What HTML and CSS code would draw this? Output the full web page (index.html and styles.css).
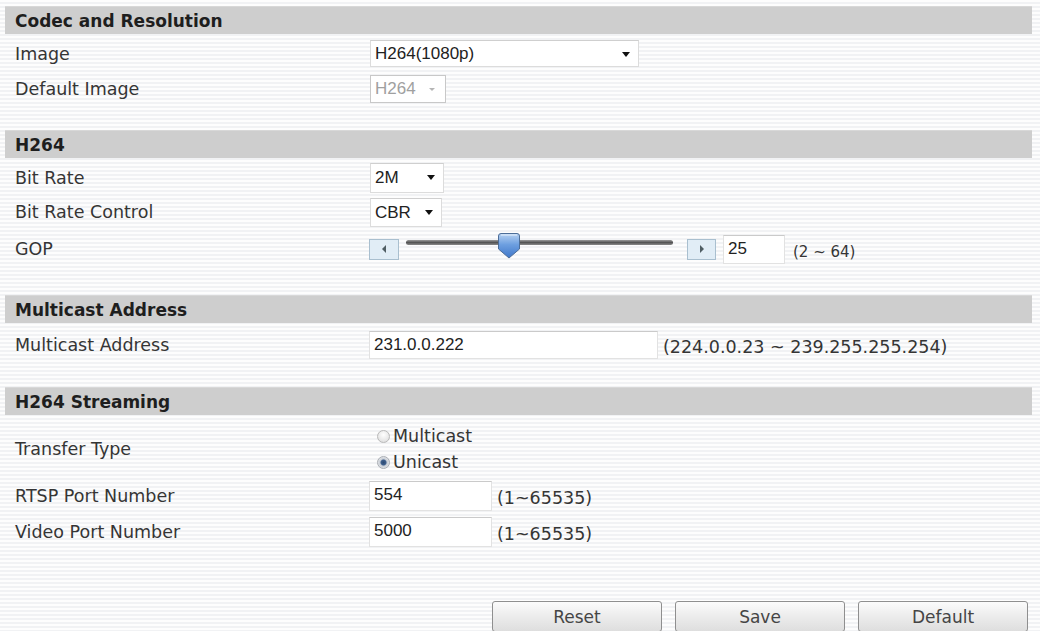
FILE: index.html
```html
<!DOCTYPE html>
<html>
<head>
<meta charset="utf-8">
<link rel="stylesheet" href="styles.css">
</head>
<body>
<div class="page">
  <section class="sec sec-codec">
    <div class="sec-head">Codec and Resolution</div>
    <div class="row">
      <div class="lbl">Image</div>
      <div class="ctl"><div class="select sel-image">H264(1080p)<i class="arr"></i></div></div>
    </div>
    <div class="row">
      <div class="lbl">Default Image</div>
      <div class="ctl"><div class="select sel-default disabled">H264<i class="arr"></i></div></div>
    </div>
  </section>

  <section class="sec sec-h264">
    <div class="sec-head">H264</div>
    <div class="row">
      <div class="lbl">Bit Rate</div>
      <div class="ctl"><div class="select sel-bitrate">2M<i class="arr"></i></div></div>
    </div>
    <div class="row">
      <div class="lbl">Bit Rate Control</div>
      <div class="ctl"><div class="select sel-brc">CBR<i class="arr"></i></div></div>
    </div>
    <div class="row row-gop">
      <div class="lbl">GOP</div>
      <div class="ctl">
        <span class="step step-left"><i class="tri tri-left"></i></span>
        <div class="slider">
          <div class="track"></div>
          <svg class="thumb" width="22" height="26" viewBox="0 0 22 26">
            <defs>
              <linearGradient id="tg" x1="0" y1="0" x2="0" y2="1">
                <stop offset="0" stop-color="#b7d2f2"/>
                <stop offset="0.45" stop-color="#6d9fe0"/>
                <stop offset="1" stop-color="#3f77c9"/>
              </linearGradient>
            </defs>
            <path d="M3 0.5 H19 Q21.5 0.5 21.5 3 V16 L11 25 L0.5 16 V3 Q0.5 0.5 3 0.5 Z" fill="url(#tg)" stroke="#4c6d98" stroke-width="1"/>
            <path d="M3 2 H19" stroke="#e2eefb" stroke-width="1"/>
          </svg>
        </div>
        <span class="step step-right"><i class="tri tri-right"></i></span>
        <div class="input inp-gop">25</div>
        <span class="range range-sm">(2 ~ 64)</span>
      </div>
    </div>
  </section>

  <section class="sec sec-mcast">
    <div class="sec-head">Multicast Address</div>
    <div class="row row-mcast">
      <div class="lbl">Multicast Address</div>
      <div class="ctl">
        <div class="input inp-mcast">231.0.0.222</div>
        <span class="range">(224.0.0.23 ~ 239.255.255.254)</span>
      </div>
    </div>
  </section>

  <section class="sec sec-stream">
    <div class="sec-head">H264 Streaming</div>
    <div class="row row-transfer">
      <div class="lbl">Transfer Type</div>
      <div class="ctl radios">
        <label class="radio"><i class="dot"></i>Multicast</label>
        <label class="radio"><i class="dot checked"></i>Unicast</label>
      </div>
    </div>
    <div class="row row-port">
      <div class="lbl">RTSP Port Number</div>
      <div class="ctl">
        <div class="input inp-port">554</div>
        <span class="range">(1~65535)</span>
      </div>
    </div>
    <div class="row row-port">
      <div class="lbl">Video Port Number</div>
      <div class="ctl">
        <div class="input inp-port">5000</div>
        <span class="range">(1~65535)</span>
      </div>
    </div>
  </section>

  <div class="actions">
    <button class="btn">Reset</button>
    <button class="btn">Save</button>
    <button class="btn">Default</button>
  </div>
</div>
</body>
</html>
```

FILE: styles.css
```css
html, body {
  margin: 0;
  padding: 0;
  height: 631px;
  overflow: hidden;
}

body {
  background: repeating-linear-gradient(to bottom,
    #fdfdfd 0px, #fdfdfd 2px,
    #f1f2f4 2px, #f1f2f4 4px);
  font-family: "DejaVu Sans", Verdana, sans-serif;
  font-size: 17.5px;
  color: #353535;
}

.page {
  width: 1027px;
  margin-left: 5px;
  padding-top: 6px;
}

.sec-head {
  height: 28px;
  line-height: 28px;
  padding-left: 10px;
  background: #cecece;
  border-top: 1px solid #d8d8d8;
  box-sizing: border-box;
  font-size: 17px;
  font-weight: bold;
  color: #1e1e1e;
}

.row {
  display: grid;
  grid-template-columns: 365px 1fr;
  align-items: center;
  height: 35px;
}

.lbl {
  padding-left: 10px;
  white-space: nowrap;
}

.ctl {
  display: flex;
  align-items: center;
}

/* section spacing */
.sec-codec { padding-bottom: 24px; }
.sec-codec .sec-head + .row { margin-top: 2px; }

.sec-h264 { padding-bottom: 26px; }
.sec-h264 .sec-head + .row { margin-top: 3px; }
.sec-h264 .row { height: 34px; }
.sec-h264 .row-gop { height: 40px; }

.sec-mcast { padding-bottom: 24px; }
.row-mcast { margin-top: 4px; height: 36px; }

.row-transfer { margin-top: 8px; height: 52px; margin-bottom: 3px; }
.row-port { height: 36px; }

/* selects */
.select {
  position: relative;
  box-sizing: border-box;
  height: 28px;
  line-height: 26px;
  padding-left: 4px;
  background: #fff;
  border: 1px solid #dcdcdc;
  border-top-color: #cfcfcf;
  font-family: "Liberation Sans", Arial, sans-serif;
  font-size: 17px;
  color: #222;
}
.select .arr {
  position: absolute;
  right: 8px;
  top: 11px;
  width: 0;
  height: 0;
  border-left: 4px solid transparent;
  border-right: 4px solid transparent;
  border-top: 5px solid #111;
}
.sel-image { width: 269px; height: 27px; }
.sel-default { width: 76px; }
.sel-bitrate { width: 74px; height: 30px; line-height: 28px; }
.sel-brc { width: 72px; height: 29px; line-height: 27px; }
.select.disabled { color: #a0a0a0; border-color: #c8c8c8; }
.select.disabled .arr { border-top-color: #b5b5b5; border-top-width: 3px; border-left-width: 3px; border-right-width: 3px; top: 12px; right: 10px; }

/* inputs */
.input {
  box-sizing: border-box;
  height: 29px;
  line-height: 25px;
  padding-left: 4px;
  background: #fff;
  border: 1px solid #e2e2e2;
  border-top-color: #cacaca;
  font-family: "Liberation Sans", Arial, sans-serif;
  font-size: 17px;
  color: #222;
}
.inp-gop { width: 62px; margin-left: 7px; }
.inp-mcast { width: 289px; height: 28px; margin-left: -1px; }
.inp-port { width: 123px; height: 30px; margin-left: -1px; }

.range {
  margin-left: 5px;
  padding-top: 4px;
  white-space: nowrap;
}
.range-sm {
  font-size: 15px;
  margin-left: 8px;
  padding-top: 6px;
}

/* GOP slider */
.step {
  box-sizing: border-box;
  width: 30px;
  height: 21px;
  background: #e1edf6;
  border: 1px solid #a9bfcf;
  display: flex;
  align-items: center;
  justify-content: center;
}
.step-left { margin-left: -1px; }
.step-right { width: 29px; }
.tri {
  width: 0;
  height: 0;
  border-top: 4px solid transparent;
  border-bottom: 4px solid transparent;
}
.tri-left { border-right: 4px solid #4f5d63; }
.tri-right { border-left: 4px solid #4f5d63; }

.slider {
  position: relative;
  width: 267px;
  height: 32px;
  margin: 0 14px 0 7px;
}
.track {
  position: absolute;
  left: 0;
  right: 0;
  top: 7px;
  height: 5px;
  border-radius: 3px;
  background: linear-gradient(to bottom, #9a9a9a, #555 50%, #8a8a8a);
}
.thumb {
  position: absolute;
  left: 92px;
  top: 0;
}

/* radios */
.radios {
  flex-direction: column;
  align-items: flex-start;
}
.radio {
  display: flex;
  align-items: center;
  height: 26px;
  margin-left: 7px;
}
.dot {
  box-sizing: border-box;
  width: 13px;
  height: 13px;
  border-radius: 50%;
  border: 1px solid #b9b9b9;
  background: radial-gradient(circle at 50% 35%, #ffffff, #d9d9d9);
  margin-right: 3px;
}
.dot.checked {
  border-color: #a9adb3;
  background: radial-gradient(circle at 50% 50%, #2d4a72 0, #3e5f8c 2.5px, #c6ccd4 3.5px, #e6e8eb 6px);
}

/* actions */
.actions {
  display: flex;
  justify-content: flex-end;
  gap: 13px;
  margin-top: 51px;
  width: 1023px;
}
.btn {
  box-sizing: border-box;
  width: 170px;
  height: 31px;
  border: 1px solid #8f8f8f;
  border-radius: 3px;
  background: linear-gradient(to bottom, #fbfbfb, #ececec 50%, #dedede);
  font-family: "DejaVu Sans", Verdana, sans-serif;
  font-size: 17px;
  color: #454545;
  padding: 0;
}
```
